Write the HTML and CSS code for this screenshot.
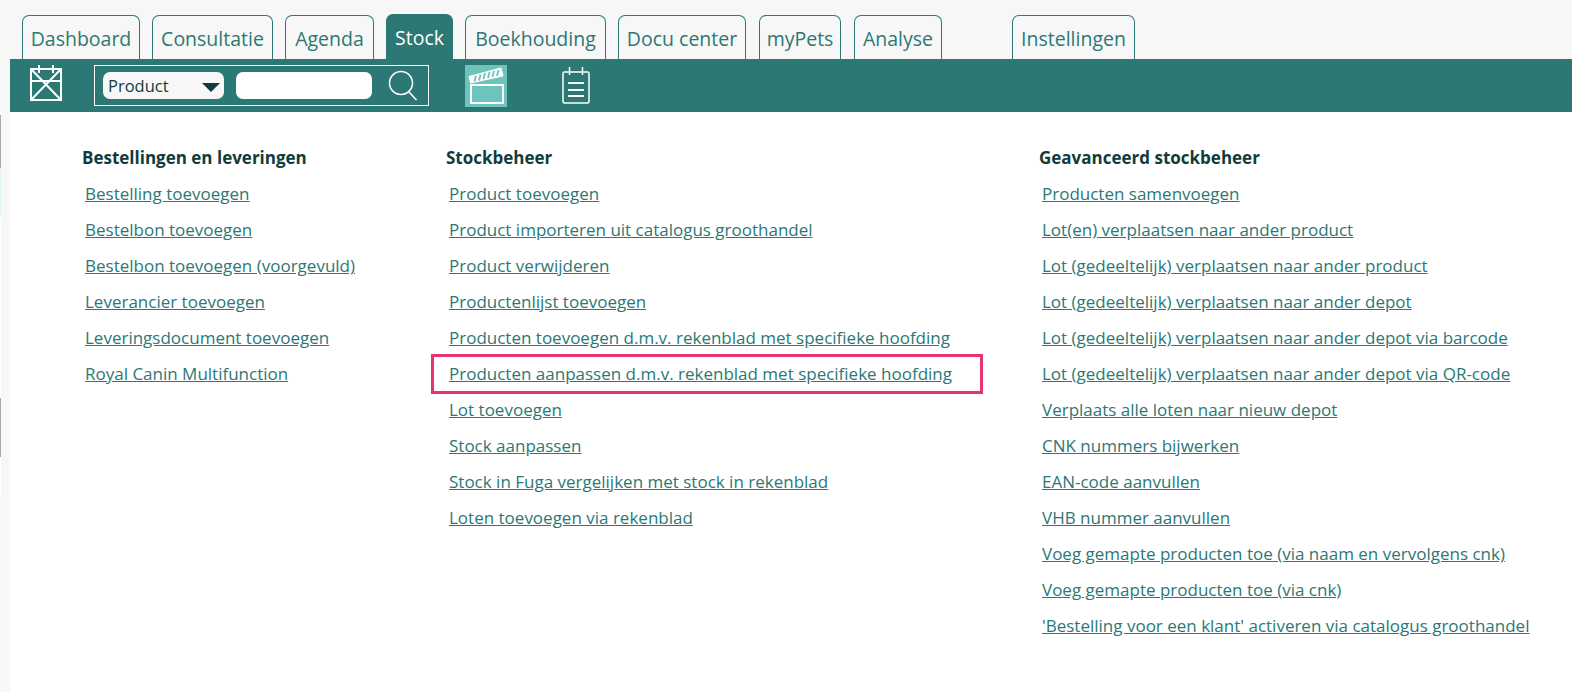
FILE: index.html
```html
<!DOCTYPE html>
<html lang="nl">
<head>
    <meta charset="UTF-8">
    <meta name="viewport" content="width=device-width, initial-scale=1.0">
    <title>Stock</title>
    <link rel="stylesheet" href="styles.css">
</head>
<body>
    <div class="side-edge">
        <div class="edge-strip">
            <span class="edge-mark edge-mark-one"></span>
            <span class="edge-tint"></span>
            <span class="edge-mark edge-mark-two"></span>
        </div>
    </div>

    <div class="page">
        <nav class="tabs">
            <a class="tab tab-dashboard">Dashboard</a>
            <a class="tab tab-consult">Consultatie</a>
            <a class="tab tab-agenda">Agenda</a>
            <a class="tab tab-active">Stock</a>
            <a class="tab tab-boek">Boekhouding</a>
            <a class="tab tab-docu">Docu center</a>
            <a class="tab tab-pets">myPets</a>
            <a class="tab tab-analyse">Analyse</a>
            <a class="tab tab-settings">Instellingen</a>
        </nav>

        <div class="toolbar">
            <!-- calendar -->
            <svg class="icon-calendar" width="34" height="38" viewBox="0 0 34 38" fill="none" stroke="#fff" stroke-width="2">
                <path d="M2 4h30v31h-30z"/>
                <path d="M10 0v8M24 0v8M2 4l30 31M32 4l-30 31M2 16h30"/>
            </svg>

            <div class="search-box">
                <div class="select-box">
                    <span>Product</span>
                    <span class="select-arrow"></span>
                </div>
                <div class="search-input"></div>
                <svg class="icon-search" width="30" height="32" viewBox="0 0 30 32" fill="none" stroke="#fff" stroke-width="1.500">
                    <circle cx="13" cy="13" r="11.500"/>
                    <path d="M20 21l8.500 9"/>
                </svg>
            </div>

            <!-- stock movie clap -->
            <div class="clap-tile">
                <svg width="42" height="42" viewBox="0 0 42 42" fill="none" stroke="#fff" stroke-width="2">
                    <rect x="6" y="20" width="32" height="18"/>
                    <path d="M4 11.500l32-8.500 2 8-32.500 7z" fill="#fff" stroke-width="1"/>
                    <path d="M11 10.500l-1.500 6M15.500 9.500l-1.500 6M20 8l-1.500 6M24.500 7l-1.500 6M29 6l-1.500 6M33.500 5l-1.500 6" stroke="#6cc4bd" stroke-width="1.800"/>
                </svg>
            </div>

            <!-- notes -->
            <svg class="icon-notes" width="28" height="37" viewBox="0 0 28 37" fill="none" stroke="#fff" stroke-width="1.500">
                <rect x="1" y="5" width="26" height="31" rx="1.500"/>
                <path d="M7.500 0v8M20.500 0v8"/>
                <path d="M6 16h16M6 23h16M6 29h16" stroke-width="2"/>
            </svg>
        </div>

        <main class="columns">
            <section class="col col-orders">
                <h3>Bestellingen en leveringen</h3>
                <ul>
                    <li><a href="#">Bestelling toevoegen</a></li>
                    <li><a href="#">Bestelbon toevoegen</a></li>
                    <li><a href="#">Bestelbon toevoegen (voorgevuld)</a></li>
                    <li><a href="#">Leverancier toevoegen</a></li>
                    <li><a href="#">Leveringsdocument toevoegen</a></li>
                    <li><a href="#">Royal Canin Multifunction</a></li>
                </ul>
            </section>

            <section class="col col-stock">
                <h3>Stockbeheer</h3>
                <ul>
                    <li><a href="#">Product toevoegen</a></li>
                    <li><a href="#">Product importeren uit catalogus groothandel</a></li>
                    <li><a href="#">Product verwijderen</a></li>
                    <li><a href="#">Productenlijst toevoegen</a></li>
                    <li><a href="#">Producten toevoegen d.m.v. rekenblad met specifieke hoofding</a></li>
                    <li class="marked"><a href="#">Producten aanpassen d.m.v. rekenblad met specifieke hoofding</a></li>
                    <li><a href="#">Lot toevoegen</a></li>
                    <li><a href="#">Stock aanpassen</a></li>
                    <li><a href="#">Stock in Fuga vergelijken met stock in rekenblad</a></li>
                    <li><a href="#">Loten toevoegen via rekenblad</a></li>
                </ul>
            </section>

            <section class="col col-advanced">
                <h3>Geavanceerd stockbeheer</h3>
                <ul>
                    <li><a href="#">Producten samenvoegen</a></li>
                    <li><a href="#">Lot(en) verplaatsen naar ander product</a></li>
                    <li><a href="#">Lot (gedeeltelijk) verplaatsen naar ander product</a></li>
                    <li><a href="#">Lot (gedeeltelijk) verplaatsen naar ander depot</a></li>
                    <li><a href="#">Lot (gedeeltelijk) verplaatsen naar ander depot via barcode</a></li>
                    <li><a href="#">Lot (gedeeltelijk) verplaatsen naar ander depot via QR-code</a></li>
                    <li><a href="#">Verplaats alle loten naar nieuw depot</a></li>
                    <li><a href="#">CNK nummers bijwerken</a></li>
                    <li><a href="#">EAN-code aanvullen</a></li>
                    <li><a href="#">VHB nummer aanvullen</a></li>
                    <li><a href="#">Voeg gemapte producten toe (via naam en vervolgens cnk)</a></li>
                    <li><a href="#">Voeg gemapte producten toe (via cnk)</a></li>
                    <li><a href="#">'Bestelling voor een klant' activeren via catalogus groothandel</a></li>
                </ul>
            </section>
        </main>
    </div>
</body>
</html>
```

FILE: styles.css
```css
/* Basic reset */
* {
    margin: 0;
    padding: 0;
    box-sizing: border-box;
}

html, body {
    height: 100%;
    overflow: hidden;
}

body {
    font-family: "Open Sans", "Noto Sans", sans-serif;
    background-color: #f7f7f7;
    color: #2b7875;
    display: flex;
}

/* Sliver on the far left */
.side-edge {
    width: 10px;
    flex-shrink: 0;
    padding-top: 112px;
}

.edge-strip {
    width: 1px;
    height: 384px;
    background-color: #fff;
    display: flex;
    flex-direction: column;
}

.edge-mark {
    background-color: #a8a8a8;
}

.edge-mark-one {
    height: 53px;
    margin-top: 3px;
}

.edge-tint {
    height: 49px;
    background-color: #e0f6f5;
}

.edge-mark-two {
    height: 59px;
    margin-top: 181px;
}

.page {
    flex: 1;
    display: flex;
    flex-direction: column;
    min-width: 0;
}

/* Tabs */
.tabs {
    display: flex;
    align-items: flex-end;
    gap: 12px;
    height: 59px;
    padding-left: 12px;
}

.tab {
    height: 44px;
    border: 1px solid #2b7875;
    border-bottom: none;
    border-radius: 7px 7px 0 0;
    font-size: 19.500px;
    line-height: 45px;
    text-align: center;
    white-space: nowrap;
}

.tab-dashboard { width: 118px; }
.tab-consult { width: 121px; }
.tab-agenda { width: 89px; }
.tab-active {
    width: 67px;
    height: 45px;
    background-color: #2b7875;
    color: #fff;
}
.tab-boek { width: 141px; }
.tab-docu { width: 128px; }
.tab-pets { width: 82px; margin-left: 1px; }
.tab-analyse { width: 88px; margin-left: 1px; }
.tab-settings { width: 123px; margin-left: 58px; }

/* Toolbar */
.toolbar {
    height: 53px;
    background-color: #2b7875;
    display: flex;
    align-items: center;
    padding-left: 19px;
}

.icon-calendar {
    margin-bottom: 3px;
    margin-right: 31px;
}

.search-box {
    width: 335px;
    height: 41px;
    border: 1px solid #fff;
    display: flex;
    align-items: center;
    padding-left: 8px;
    margin-right: 36px;
}

.select-box {
    width: 121px;
    height: 27px;
    background-color: #f7f7f7;
    border-radius: 7px;
    color: #123b3c;
    font-size: 16.500px;
    line-height: 26px;
    padding-left: 5px;
    display: flex;
    justify-content: space-between;
    align-items: center;
    padding-right: 4px;
    margin-right: 12px;
}

.select-arrow {
    width: 0;
    height: 0;
    border-left: 9px solid transparent;
    border-right: 9px solid transparent;
    border-top: 9px solid #123b3c;
    margin-top: 3px;
}

.search-input {
    width: 136px;
    height: 27px;
    background-color: #fff;
    border-radius: 7px;
    margin-right: 16px;
}

.clap-tile {
    width: 42px;
    height: 42px;
    background-color: #6cc4bd;
    margin-right: 55px;
}

/* Link columns */
.columns {
    flex: 1;
    background-color: #fff;
    display: flex;
    padding-top: 35px;
}

.col h3 {
    font-size: 17px;
    font-weight: 700;
    color: #123b3c;
    line-height: 22px;
    margin-bottom: 7px;
}

.col ul {
    list-style: none;
    padding-left: 3px;
}

.col li {
    height: 36px;
    line-height: 36px;
    font-size: 17px;
    white-space: nowrap;
}

.col a {
    color: #2b7875;
}

.col-orders { width: 364px; margin-left: 72px; }
.col-stock { width: 593px; }

/* Red marker round one row */
.marked {
    position: relative;
}

.marked::after {
    content: "";
    position: absolute;
    left: -18px;
    top: -2px;
    width: 552px;
    height: 40px;
    box-sizing: border-box;
    border: 3px solid #e8336d;
}
```
